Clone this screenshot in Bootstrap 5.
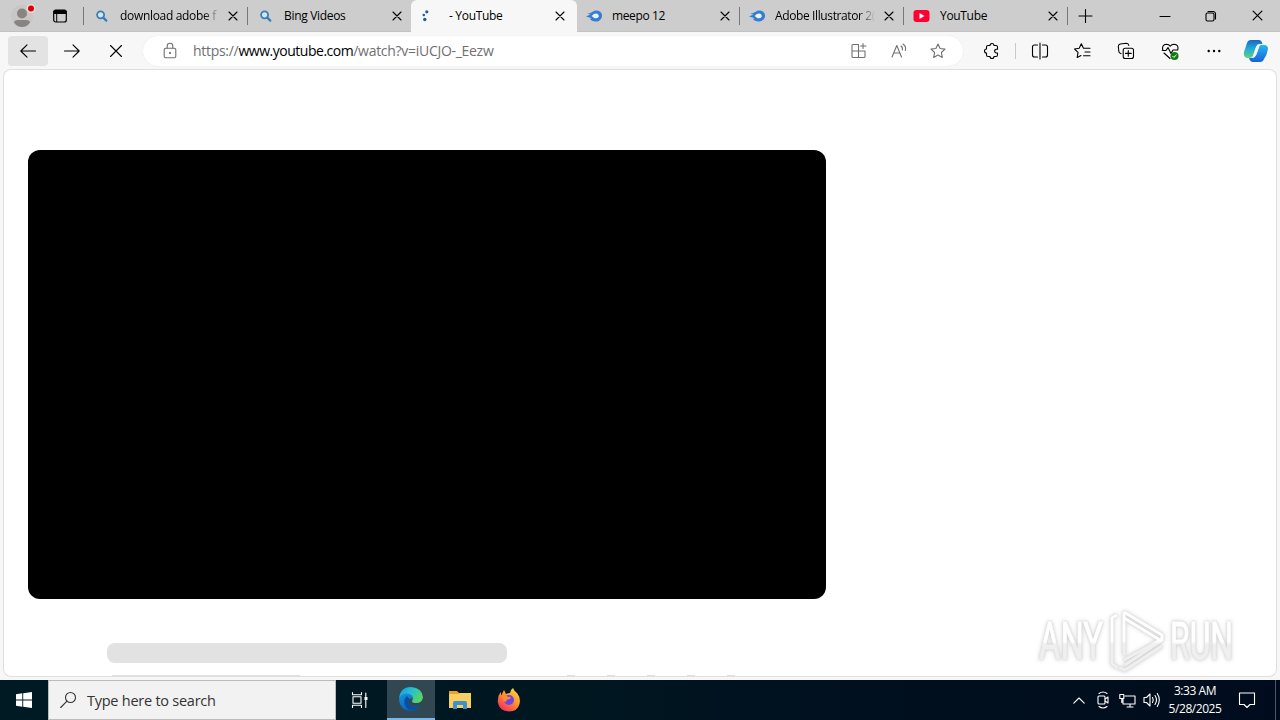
<!DOCTYPE html>
<html lang="en">
<head>
    <meta charset="utf-8">
    <title>- YouTube</title>
    <link rel="stylesheet" href="https://cdn.jsdelivr.net/npm/bootstrap@5.3.0/dist/css/bootstrap.min.css">
    <style>
        body { width: 1280px; height: 720px; overflow: hidden; background: #f7f7f7; color: #000; font-family: "Open Sans", "Noto Sans", sans-serif; }
        svg { display: block; flex: none; overflow: visible; }
        .ln { fill: none; stroke: currentColor; stroke-width: 1.1; stroke-linecap: round; stroke-linejoin: round; }

        .tabstrip { height: 32px; background: #cdcdcd; font-size: 12px; border-bottom: 1px solid #c2c2c2; }
        .strip-left { width: 84px; padding-left: 10px; border-right: 1px solid #777; height: 18px; }
        .tab { width: 164px; height: 31px; padding-left: 9px; padding-right: 9px; }
        .tab-end { border-right: 1px solid #777; height: 18px; }
        .tab-short { width: 163px; }
        .tab-on { width: 166px; height: 32px; margin-bottom: -1px; background: #f7f7f7; border-radius: 6px 6px 0 0; padding-left: 8px; padding-right: 12px; }
        .tab-name { width: 100px; margin-left: 11px; line-height: 18px; letter-spacing: -.32px; }
        .tab-comet { margin-left: 9px; letter-spacing: -.38px; }
        .tab-on .tab-name { margin-left: 10px; }
        .faded { -webkit-mask-image: linear-gradient(90deg, #000 84%, transparent 100%); mask-image: linear-gradient(90deg, #000 84%, transparent 100%); }
        .winbtn { width: 46px; }

        .toolbar { height: 38px; padding-left: 8px; }
        .tool { width: 44px; height: 30px; }
        .back { width: 40px; margin-right: 2px; background: #e3e3e3; border-radius: 4px; }
        .address { width: 820px; height: 30px; margin-left: 5px; background: #fff; border-radius: 15px; color: #707070; font-size: 14px; box-shadow: 0 0 1px #ddd; }
        .lock { margin-left: 20px; margin-right: 16px; }
        .url { letter-spacing: -.29px; line-height: 20px; }
        .url span { letter-spacing: -.48px; }
        .addr-btn { width: 40px; }
        .ext { margin-left: 7px; margin-right: 1px; }
        .divider { width: 1px; height: 16px; background: #c9c9c9; }
        .copilot { margin-left: 8px; }

        .page { height: 606px; margin: 0 4px 4px; background: #fff; border-radius: 7px; box-shadow: 0 0 0 1px #dfdfdf; padding: 80px 0 0 24px; }
        .player { width: 798px; height: 449px; background: #000; border-radius: 12px; }
        .title-bone { width: 400px; height: 20px; margin: 44px 0 0 79px; background: #e2e2e2; border-radius: 8px; }
        .bones { margin-top: 12px; padding-left: 84px; }
        .bones div { height: 1px; background: #e0e0e0; }
        .bone-lg { width: 188px; margin-right: 267px; }
        .bone-sm { width: 8px; margin-right: 32px; }

        .taskbar { height: 40px; background: linear-gradient(90deg, #001a24 0, #001720 45%, #00111f 60%, #000c1d 100%); color: #fff; }
        .start { width: 48px; }
        .searchbox { width: 288px; height: 40px; background: #f2f2f2; border: 1px solid #bbb; color: #333; font-size: 14.5px; letter-spacing: -.25px; padding-left: 11px; }
        .search-label { margin-left: 9px; padding-top: 2px; }
        .app { width: 49px; height: 40px; }
        .taskview { width: 51px; padding-right: 4px; }
        .app-on { width: 48px; background: #314852; border-bottom: 2px solid #76b9ed; }
        .tray { width: 24px; }
        .clock { width: 64px; font-size: 12px; line-height: 18px; letter-spacing: -.45px; }
        .bell { margin-left: 12px; margin-right: 20px; }
        .peek { width: 5px; border-left: 1px solid #4b5563; }
        .watermark { left: 1031px; top: 603px; filter: drop-shadow(0 0 1px #d2d2d2) drop-shadow(0 0 2px #d8d8d8); }
    </style>
    <script src="https://cdn.jsdelivr.net/npm/bootstrap@5.3.0/dist/js/bootstrap.bundle.min.js"></script>
</head>
<body class="d-flex flex-column">
    <svg width="0" height="0" class="position-absolute">
        <defs>
            <symbol id="x" viewBox="0 0 10 10"><path class="ln" d="M1 1l8 8M9 1L1 9"/></symbol>
            <symbol id="find" viewBox="0 0 16 16"><circle cx="7.6" cy="6.8" r="3.5" fill="#d2e6f4" stroke="#397cb8" stroke-width="1.8"/><path d="M10.3 9.6l3 3" stroke="#397cb8" stroke-width="2.2" stroke-linecap="round"/></symbol>
            <symbol id="comet" viewBox="0 0 18 14"><path d="M0 7.5Q3 6 5 5.8L1.5 4.6Q5 4 7 2.4Q11-.2 15 2.5Q18 5 16.5 9Q14 13.5 9.5 12.8Q6 12.4 4 10.2L6 9.5Z" fill="#397bd0"/><path d="M6 7q3-3.3 6-2.3 2 1 1.5 3Q12 10 9 9.3Z" fill="#e0f6ff"/></symbol>
            <linearGradient id="edgeA" x2="1" y2=".5"><stop stop-color="#169bdf"/><stop offset=".5" stop-color="#27bed1"/><stop offset="1" stop-color="#55d663"/></linearGradient>
            <linearGradient id="edgeB" x2=".5" y2="1"><stop stop-color="#1595df"/><stop offset="1" stop-color="#0b5fb4"/></linearGradient>
            <linearGradient id="fox" x1=".9" x2=".2" y2="1"><stop stop-color="#ffe14a"/><stop offset=".45" stop-color="#ff972a"/><stop offset="1" stop-color="#f52662"/></linearGradient>
            <linearGradient id="copA" x2="0" y2="1"><stop stop-color="#1966c9"/><stop offset=".5" stop-color="#21aed8"/><stop offset="1" stop-color="#63d278"/></linearGradient>
            <linearGradient id="copB" x2="0" y2="1"><stop stop-color="#26b8ed"/><stop offset="1" stop-color="#1762dd"/></linearGradient>
            <linearGradient id="glass" x2="0" y2="1"><stop offset=".5" stop-color="#fff"/><stop offset=".55" stop-color="#efefef"/></linearGradient>
        </defs>
    </svg>

    <div class="tabstrip d-flex align-items-center flex-shrink-0">
        <div class="strip-left d-flex align-items-center">
            <svg width="26" height="26" viewBox="0 0 26 26"><circle cx="12" cy="13" r="11" fill="#c9c7c5"/><circle cx="12" cy="10.5" r="5" fill="#888482"/><path d="M4 19.500q0-2.500 4-2.500h8q4 0 4 2.500-3 4.500-8 4.500t-8-4.500" fill="#888482"/><circle cx="21" cy="5.500" r="4.500" fill="#ddd"/><circle cx="21" cy="5.500" r="3" fill="#e00000"/></svg>
            <svg class="ms-3" width="16" height="16" viewBox="0 0 16 16"><rect x="1.7" y="2" width="12.6" height="12" rx="2" fill="none" stroke="#000" stroke-width="1.2"/><path d="M1.5 4a2 2 0 0 1 2-2h9a2 2 0 0 1 2 2v2h-13z"/><path d="M4.7 5v9" stroke="#000"/></svg>
        </div>
        <div class="tab tab-end d-flex align-items-center"><svg width="16" height="16"><use href="#find"/></svg><div class="tab-name faded text-nowrap">download adobe f</div><svg class="ms-auto" width="10" height="10"><use href="#x"/></svg></div>
        <div class="tab tab-short d-flex align-items-center"><svg width="16" height="16"><use href="#find"/></svg><div class="tab-name">Bing Videos</div><svg class="ms-auto" width="10" height="10"><use href="#x"/></svg></div>
        <div class="tab tab-on d-flex align-items-center"><svg width="16" height="16" viewBox="0 0 16 16" fill="#235c9b"><circle cx="7.8" cy="3.8" r="1.6"/><circle cx="4.8" cy="7" r="1.3"/><circle cx="5.800" cy="11.500" r="1.700"/></svg><div class="tab-name ps-1">- YouTube</div><svg class="ms-auto" width="10" height="10"><use href="#x"/></svg></div>
        <div class="tab tab-short tab-end d-flex align-items-center"><svg width="17" height="14"><use href="#comet"/></svg><div class="tab-name tab-comet">meepo 12</div><svg class="ms-auto" width="10" height="10"><use href="#x"/></svg></div>
        <div class="tab tab-end d-flex align-items-center"><svg width="17" height="14"><use href="#comet"/></svg><div class="tab-name tab-comet faded text-nowrap">Adobe Illustrator 2(</div><svg class="ms-auto" width="10" height="10"><use href="#x"/></svg></div>
        <div class="tab tab-end d-flex align-items-center"><svg width="16" height="12" viewBox="0 0 16 12"><rect x=".5" width="16" height="12" rx="3" fill="#f03"/><path d="M6.500 3l5 3-5 3z" fill="#fff"/></svg><div class="tab-name">YouTube</div><svg class="ms-auto" width="10" height="10"><use href="#x"/></svg></div>
        <svg class="ms-2 me-auto" width="18" height="18" viewBox="0 0 18 18"><path class="ln" d="M9.500 2.500v13M3 9h13"/></svg>
        <div class="winbtn d-flex justify-content-center"><svg width="10" height="10"><path class="ln" d="M0 5.500h10"/></svg></div>
        <div class="winbtn d-flex justify-content-center"><svg width="10" height="10"><g class="ln"><rect x="0" y="2" width="8" height="8" rx="1.500"/><path d="M2 .5H7.500a2.500 2.500 0 0 1 2 2V8"/></g></svg></div>
        <div class="winbtn d-flex justify-content-center"><svg width="11" height="11"><use href="#x"/></svg></div>
    </div>

    <div class="toolbar d-flex align-items-center flex-shrink-0">
        <div class="tool back d-flex align-items-center justify-content-center"><svg width="16" height="14"><path class="ln" d="M15.500 7H.8M7 .8L.8 7 7 13.200"/></svg></div>
        <div class="tool d-flex align-items-center justify-content-center"><svg width="16" height="14"><path class="ln" d="M.5 7h14.700M9 .8L15.200 7 9 13.200"/></svg></div>
        <div class="tool d-flex align-items-center justify-content-center"><svg width="14" height="14" viewBox="0 0 14 14"><path class="ln" d="M1.500 1.500l11 11M12.500 1.500l-11 11"/></svg></div>
        <div class="address d-flex align-items-center">
            <svg class="lock" width="14" height="16"><g class="ln"><rect x="1.200" y="5.300" width="11.600" height="9.500" rx="1.500"/><path d="M4.200 5V3a2.800 2.800 0 0 1 5.600 0v2"/></g><circle cx="7" cy="10" r="1" fill="#555"/></svg>
            <div class="url me-auto">https://<span class="text-black">www.youtube.com</span>/watch?v=iUCJO-_Eezw</div>
            <div class="addr-btn d-flex justify-content-center"><svg width="16" height="16"><path class="ln" d="M7.500 1.500H2a1 1 0 0 0-1 1v11a1 1 0 0 0 1 1h11a1 1 0 0 0 1-1V8H1M7.500 1.500v13M12 .5v5M9.500 3h5.500"/></svg></div>
            <div class="addr-btn d-flex justify-content-center"><svg width="16" height="16"><path class="ln" d="M1 14L5.800 2.500 10.500 14M2.700 10h6.200M10 3q2 1.300 1.300 4M12 1q3.500 2.300 2.300 6.500"/></svg></div>
            <div class="addr-btn d-flex justify-content-center me-1 pe-1"><svg width="16" height="16"><path class="ln" d="M9 1l2.100 4.500 4.900.6-3.600 3.400.9 4.900L9 12l-4.300 2.400.9-4.900L2 6.100l4.900-.6z"/></svg></div>
        </div>
        <div class="tool ext d-flex align-items-center justify-content-center"><svg width="16" height="16"><path class="ln" d="M4 2.500h2a2 2 0 0 1 4 0h2q1.500 0 1.500 1.500v2.200h-1a1.900 1.900 0 1 0 0 3.800h1V12q0 1.500-1.500 1.500h-2a2 2 0 0 1-4 0H4q-1.500 0-1.500-1.500v-2a2 2 0 0 1 0-4V4q0-1.500 1.500-1.500"/></svg></div>
        <div class="divider"></div>
        <div class="tool d-flex align-items-center justify-content-center ms-0 ps-1"><svg width="16" height="16"><path class="ln" d="M5.500 2H2.500Q.5 2 .5 4v8q0 2 2 2h3M8 0v16M10.500 2h3q2 0 2 2v8q0 2-2 2h-3"/></svg></div>
        <div class="tool d-flex align-items-center justify-content-center"><svg width="17" height="16"><path class="ln" d="M9.500 5.300L7.300.8 5.200 5.300.5 6l3.500 3.300-.8 5.200L7 12.500M9.500 5.300H16M11 9h5M9.500 12.700H16"/></svg></div>
        <div class="tool d-flex align-items-center justify-content-center"><svg width="16" height="16"><g class="ln"><rect x="5.200" y="5.200" width="10.300" height="10.300" rx="2"/><path d="M3 10.600Q1 10.400.8 8.200L.3 3.500Q.3 1.400 2.200 1L8.500.3Q10.500.3 10.800 2.500M10.300 7.500v5.700M7.500 10.400h5.700"/></g></svg></div>
        <div class="tool d-flex align-items-center justify-content-center"><svg width="17" height="17"><path class="ln" d="M.8 7.500Q-.5 1.500 4.400 1.200 7 1.200 8.200 3.200 9.500 1.200 12 1.200q5 .3 3.800 5.800M.3 7.500H4l2-3 3 6 2-3.500h4.500M2 10l6 5.500"/><circle cx="12.500" cy="13" r="4" fill="#107c10"/><path d="M10.500 13l1.400 1.400 2.600-2.600" fill="none" stroke="#fff"/></svg></div>
        <div class="tool d-flex align-items-center justify-content-center"><svg width="14" height="4"><circle cx="1.700" cy="2" r="1.200"/><circle cx="7" cy="2" r="1.200"/><circle cx="12.300" cy="2" r="1.200"/></svg></div>
        <svg class="copilot" width="24" height="24" viewBox="0 0 24 24"><path d="M7 1h8q2.500 0 3.500 4H15q-2 0-3 3l-3 9Q8 19 5 19H3q-4-1-3-6l3-9q1-3 4-3" fill="url(#copA)"/><path d="M17 6h3q4 0 4 4-1 6-4 10-1 3-4 3H9q-3 0-4-4h3q3 0 4-3l3-8q0-2 2-2" fill="url(#copB)"/><path d="M12.500 7h3L12 16.500H9z" fill="#f7f7f7"/></svg>
    </div>

    <main class="page flex-shrink-0 overflow-hidden">
        <div class="player"></div>
        <div class="title-bone"></div>
        <div class="bones d-flex">
            <div class="bone-lg"></div>
            <div class="bone-sm"></div>
            <div class="bone-sm"></div>
            <div class="bone-sm"></div>
            <div class="bone-sm"></div>
            <div class="bone-sm"></div>
        </div>
    </main>

    <div class="taskbar d-flex align-items-center flex-shrink-0">
        <div class="start d-flex justify-content-center"><svg width="16" height="16" fill="#fff"><path d="M0 2.200l6.300-.9v6.200H0zM7.200 1.200L16 0v7.500H7.200zM0 8.400h6.300v6.300L0 13.800zM7.200 8.400H16V16l-8.800-1.200z"/></svg></div>
        <div class="searchbox d-flex align-items-center"><svg width="18" height="18"><g class="ln" stroke="#222"><circle cx="10.500" cy="6.500" r="5"/><path d="M7 10.200L.7 16.500"/></g></svg><span class="search-label">Type here to search</span></div>
        <div class="app taskview d-flex align-items-center justify-content-center"><svg width="17" height="16"><path class="ln" d="M1.500.5v2.200h9V.5M1.500 15.500v-2.200h9v2.200M2 4.700h8v6.600H2zM14.800 1v3.500M14.800 8v7.500"/><path d="M13.500 5h3v3h-3z" fill="#fff"/></svg></div>
        <div class="app app-on d-flex align-items-center justify-content-center"><svg width="24" height="24" viewBox="0 0 24 24"><path d="M0 12Q1 0 12 0q11.500 1 12 10.500Q23 16 17 16q-4 0-4-2 2-3-1-5Q4 5 0 12" fill="url(#edgeA)"/><path d="M0 13Q1 6 8 6.500q6 .5 6 5-2-1-4 1-2 6 5 7 3 .5 7-1.500Q18 24 11.500 24 1 23 0 13" fill="url(#edgeB)"/><path d="M8 9q-5 5-1 11 3 4 7 3.500 6-2 8-5.500-5 2.500-9 1-5-3-2.500-7" fill="#0b4e9e"/></svg></div>
        <div class="app d-flex align-items-center justify-content-center"><svg width="22" height="20"><path d="M0 1h8l2 2h12v15H0z" fill="#e9a22a"/><path d="M0 4h9l2-1h11v15H0z" fill="#f8d060"/><path d="M4 19v-6q0-2 2-2h10q2 0 2 2v6h-4v-4H8v4z" fill="#3d91cf"/></svg></div>
        <div class="app d-flex align-items-center justify-content-center"><svg width="24" height="24" viewBox="0 0 24 24"><path d="M3.500 4l1 3L7 2l2 4q2-1 4-1 0-3 3-5 1 3 4 5 4 5 2.500 11-2 7.500-10.500 7.500Q2 23 .8 14 .5 8 3.500 4" fill="url(#fox)"/><circle cx="12" cy="12" r="5" fill="#7145e5"/><path d="M5 8q4-2 6 1 4-1 2 2-4 0-4 3-4-1-4-6" fill="#ff8b2c"/></svg></div>
        <div class="tray d-flex justify-content-center ms-auto"><svg width="12" height="7"><path class="ln" d="M.8 6.200L6 1l5.200 5.200"/></svg></div>
        <div class="tray d-flex justify-content-center"><svg width="14" height="18"><g class="ln"><rect x="2" y="5" width="7" height="8" rx="1"/><path d="M9 8l3-2v6l-3-2M3 2.500q4-3 8 0M3 15.500q4 3 8 0"/></g></svg></div>
        <div class="tray d-flex justify-content-center"><svg width="17" height="15"><path class="ln" d="M6 3h10v8H4V6M8 14h6M11 11v3M.8 1.500h4v4h-4zM2.800 5.500v4"/></svg></div>
        <div class="tray d-flex justify-content-center"><svg width="17" height="16"><path class="ln" d="M1 5.500h2.500L7 2v12l-3.500-3.500H1zM9.500 5.500q1.500 2.500 0 5M12 3.500q3 4.500 0 9M14.300 1.500q4 6.500 0 13"/></svg></div>
        <div class="clock text-center">3:33 AM<br>5/28/2025</div>
        <svg class="bell" width="16" height="16"><path class="ln" d="M.5 1h15v11.500H11L8 15.500 5 12.500H.5z"/></svg>
        <div class="peek align-self-stretch"></div>
    </div>

    <svg class="watermark position-absolute" width="210" height="70" fill="url(#glass)" font-family="Roboto, sans-serif" font-size="52">
        <text x="8" y="56" textLength="64" lengthAdjust="spacingAndGlyphs" stroke="url(#glass)">ANY</text>
        <text x="139" y="56" textLength="63" lengthAdjust="spacingAndGlyphs" stroke="url(#glass)">RUN</text>
        <path d="M86 12l-5 3v46l6 4M93 9l38 23v5L94 62M93 9v43M93 15l36 22-36 20M88 65l6 2 37-24" fill="none" stroke="url(#glass)" stroke-width="3" stroke-linejoin="round"/>
    </svg>
</body>
</html>
